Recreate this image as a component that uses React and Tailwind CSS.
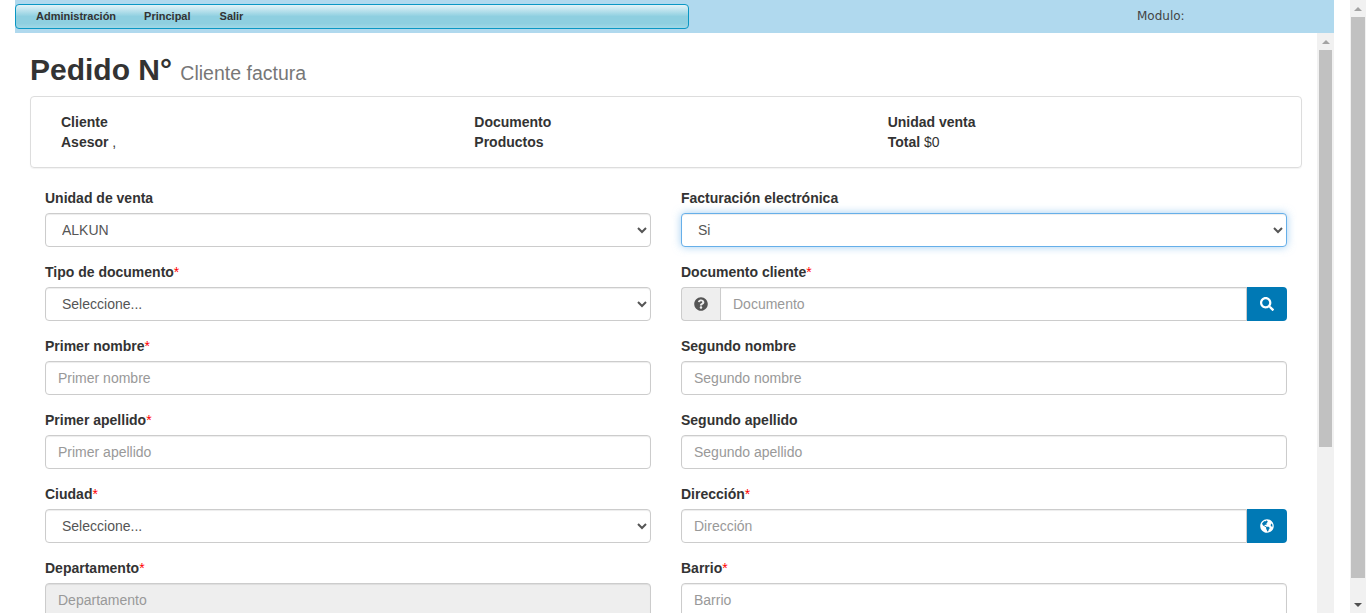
import { FaQuestionCircle, FaSearch, FaGlobeAmericas } from 'react-icons/fa'

const inputBase =
  'block h-[34px] w-full border border-[#ccc] px-3 text-sm text-[#555] shadow-[inset_0_1px_1px_rgba(0,0,0,0.075)] placeholder:text-[#999] outline-none'
const inputClass = inputBase + ' rounded bg-white'

function Label({ text, required }) {
  return (
    <label className="mb-[5px] block h-5 text-sm leading-5 font-bold text-[#333]">
      {text}
      {required && <span className="font-normal text-[#f00]">*</span>}
    </label>
  )
}

function Field({ label, required, children }) {
  return (
    <div className="mb-[15px]">
      <Label text={label} required={required} />
      {children}
    </div>
  )
}

function Select({ value, focused }) {
  return (
    <select
      defaultValue={value}
      className={
        focused
          ? 'block h-[34px] w-full rounded border border-[#66afe9] bg-white px-3 text-sm text-[#555] shadow-[inset_0_1px_1px_rgba(0,0,0,0.075),0_0_8px_rgba(102,175,233,0.6)] outline-none'
          : inputClass
      }
    >
      <option>{value}</option>
    </select>
  )
}

function Scrollbar({ className, thumbClass, downArrow }) {
  return (
    <div className={className}>
      <div className="flex h-[17px] shrink-0 items-center justify-center">
        <span className="h-0 w-0 border-x-[4px] border-b-[4px] border-x-transparent border-b-[#a3a3a3]" />
      </div>
      <div className={thumbClass} />
      <div className="flex-1" />
      {downArrow && (
        <div className="flex h-[17px] shrink-0 items-center justify-center">
          <span className="h-0 w-0 border-x-[4px] border-t-[4px] border-x-transparent border-t-[#505050]" />
        </div>
      )}
    </div>
  )
}

export default function App() {
  return (
    <div className="flex h-[613px] overflow-hidden bg-white font-['Liberation_Sans',Arial,sans-serif]">
      <div className="flex w-[1350px] shrink-0 flex-col pr-4 pl-[15px]">
        {/* top bar */}
        <div className="flex h-[33px] shrink-0 items-start bg-[#b0d9ee]">
          <nav className="mt-1 flex h-[25px] w-[674px] items-center gap-7 rounded-[4px] border border-[#0a97c4] bg-[linear-gradient(to_bottom,#e3f3f8_0%,#8ecfe0_50%,#8ecfe0_80%,#a0d8e6_100%)] pl-5 text-[11px] font-bold text-[#333]">
            <a>Administración</a>
            <a>Principal</a>
            <a className="ml-px">Salir</a>
          </nav>
          <span className="mt-[9px] ml-[448px] font-['DejaVu_Sans',sans-serif] text-xs leading-[15px] text-[#444]">
            Modulo:
          </span>
        </div>

        <div className="flex min-h-0 flex-1">
          <div className="w-[1302px] shrink-0 overflow-hidden px-[15px]">
            <h1 className="mt-5 mb-2.5 h-[33px] text-[30px] leading-[33px] font-bold text-[#333]">
              Pedido N° <small className="text-[19.5px] font-normal text-[#777]">Cliente factura</small>
            </h1>

            {/* resumen */}
            <div className="mb-5 grid h-[72px] grid-cols-3 rounded border border-[#ddd] py-[15px] pl-[30px] text-sm leading-5 text-[#333] shadow-[0_1px_1px_rgba(0,0,0,0.05)]">
              <div>
                <div className="font-bold">Cliente</div>
                <div>
                  <b>Asesor</b> ,
                </div>
              </div>
              <div>
                <div className="font-bold">Documento</div>
                <div className="font-bold">Productos</div>
              </div>
              <div>
                <div className="font-bold">Unidad venta</div>
                <div>
                  <b>Total</b> $0
                </div>
              </div>
            </div>

            {/* formulario */}
            <div className="grid grid-cols-2 gap-x-[30px] px-[15px]">
              <Field label="Unidad de venta">
                <Select value="ALKUN" />
              </Field>
              <Field label="Facturación electrónica">
                <Select value="Si" focused />
              </Field>
              <Field label="Tipo de documento" required>
                <Select value="Seleccione..." />
              </Field>
              <Field label="Documento cliente" required>
                <div className="flex h-[34px]">
                  <span className="flex w-[39px] shrink-0 items-center justify-center rounded-l border border-r-0 border-[#ccc] bg-[#eee] text-sm text-[#555]">
                    <FaQuestionCircle />
                  </span>
                  <input placeholder="Documento" className={inputBase + ' bg-white'} />
                  <button className="flex w-10 shrink-0 items-center justify-center rounded-r bg-[#0079b5] text-sm text-white">
                    <FaSearch />
                  </button>
                </div>
              </Field>
              <Field label="Primer nombre" required>
                <input placeholder="Primer nombre" className={inputClass} />
              </Field>
              <Field label="Segundo nombre">
                <input placeholder="Segundo nombre" className={inputClass} />
              </Field>
              <Field label="Primer apellido" required>
                <input placeholder="Primer apellido" className={inputClass} />
              </Field>
              <Field label="Segundo apellido">
                <input placeholder="Segundo apellido" className={inputClass} />
              </Field>
              <Field label="Ciudad" required>
                <Select value="Seleccione..." />
              </Field>
              <Field label="Dirección" required>
                <div className="flex h-[34px]">
                  <input placeholder="Dirección" className={inputBase + ' rounded-l bg-white'} />
                  <button className="flex w-10 shrink-0 items-center justify-center rounded-r bg-[#0079b5] text-sm text-white">
                    <FaGlobeAmericas />
                  </button>
                </div>
              </Field>
              <Field label="Departamento" required>
                <input placeholder="Departamento" disabled className={inputBase + ' rounded bg-[#eee]'} />
              </Field>
              <Field label="Barrio" required>
                <input placeholder="Barrio" className={inputClass} />
              </Field>
            </div>
          </div>

          <Scrollbar
            className="flex w-[17px] shrink-0 flex-col bg-[#f1f1f1]"
            thumbClass="mx-auto h-[397px] w-[13px] bg-[#c1c1c1]"
          />
        </div>
      </div>

      <Scrollbar
        className="flex w-4 shrink-0 flex-col bg-[#f1f1f1]"
        thumbClass="mx-auto h-[561px] w-[14px] bg-[#c1c1c1]"
        downArrow
      />
    </div>
  )
}
